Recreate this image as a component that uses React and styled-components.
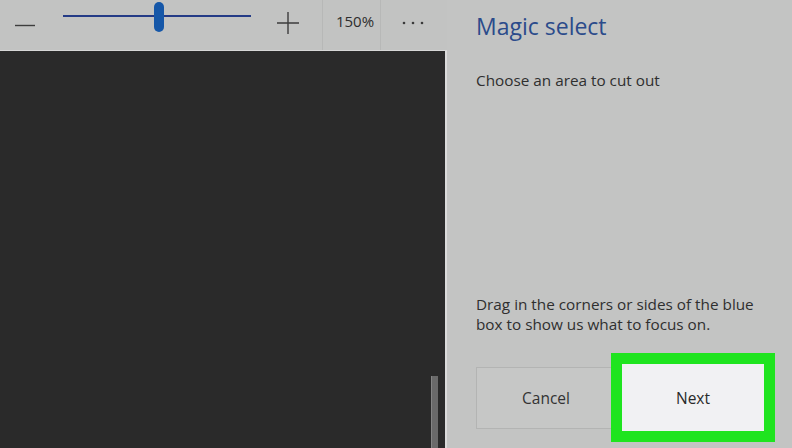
import React from "react";
import styled, { createGlobalStyle } from "styled-components";

const Global = createGlobalStyle`
  html, body { margin: 0; padding: 0; background: #c3c4c3; }
  body { font-family: "Open Sans", "Noto Sans", sans-serif; }
  #root { width: 792px; height: 448px; overflow: hidden; }
`;

const Screen = styled.div`
  display: flex;
  width: 792px;
  height: 448px;
  background: #c3c4c3;
`;

const LeftColumn = styled.div`
  display: flex;
  flex-direction: column;
  width: 447px;
  flex: none;
`;

const Toolbar = styled.div`
  display: flex;
  align-items: stretch;
  height: 50px;
  border-bottom: 1px solid #d6d7d6;
  background: #c2c3c2;
`;

const ToolButton = styled.div`
  display: flex;
  align-items: center;
  justify-content: center;
  width: ${(p) => p.$w}px;
  padding-right: ${(p) => p.$pr || 0}px;
  box-sizing: border-box;
  flex: none;
  color: #3a3a3a;
`;

const SliderTrack = styled.div`
  position: relative;
  width: 188px;
  margin: 0 14px 0 14px;
  flex: none;
  &::before {
    content: "";
    position: absolute;
    left: 0;
    right: 0;
    top: 15px;
    height: 2px;
    background: #243b86;
  }
`;

const Thumb = styled.div`
  position: absolute;
  top: 2px;
  width: 10px;
  height: 30px;
  border-radius: 5px;
  background: #1557a8;
`;

const Divider = styled.div`
  width: 1px;
  background: #b7b8b7;
  flex: none;
`;

const ZoomLabel = styled.div`
  display: flex;
  align-items: center;
  justify-content: center;
  width: 57px;
  padding: 0 0 8px 7px;
  box-sizing: border-box;
  font-size: 15px;
  color: #2e2e2e;
  flex: none;
`;

const Canvas = styled.div`
  position: relative;
  flex: 1;
  background: #2a2a2a;
  border-right: 2px solid #dadada;
`;

const ScrollThumb = styled.div`
  position: absolute;
  left: 431px;
  top: 325px;
  width: 6px;
  bottom: 0;
  background: #6a6a6a;
  border-left: 1px solid #858585;
`;

const Panel = styled.div`
  flex: 1;
  display: flex;
  flex-direction: column;
  padding: 8px 18px 0 29px;
  color: #303030;
`;

const Title = styled.h1`
  margin: 0;
  font-size: 23px;
  font-weight: 400;
  color: #2b4b8b;
  line-height: 36px;
`;

const Text = styled.p`
  margin: ${(p) => p.$m};
  font-size: 15.3px;
  line-height: 20px;
  color: #2f2f2f;
`;

const Spacer = styled.div`
  flex: 1;
`;

const Buttons = styled.div`
  position: relative;
  display: flex;
  height: 62px;
  margin: 0 0 19px 0;
`;

const CancelButton = styled.div`
  display: flex;
  align-items: center;
  justify-content: center;
  width: 166px;
  padding-right: 26px;
  box-sizing: border-box;
  border: 1px solid #b3b4b3;
  background: #c6c7c6;
  font-size: 15.5px;
  color: #333;
`;

const NextButton = styled.div`
  position: absolute;
  left: 135px;
  top: -14px;
  width: 142px;
  height: 67px;
  display: flex;
  align-items: center;
  justify-content: center;
  background: #f1f1f3;
  border: 11px solid #1fe41f;
  font-size: 15.5px;
  color: #2a2a2a;
`;

export default function App() {
  return (
    <>
      <Global />
      <Screen>
        <LeftColumn>
          <Toolbar>
            <ToolButton $w={49}>
              <svg width="22" height="22" viewBox="0 0 22 22">
                <path d="M1 11.5H21" stroke="#3d3d3d" strokeWidth="1.4" />
              </svg>
            </ToolButton>
            <SliderTrack>
              <Thumb style={{ left: 91 }} />
            </SliderTrack>
            <ToolButton $w={57} $pr={12}>
              <svg width="24" height="24" viewBox="0 0 24 24" style={{ marginBottom: 4 }}>
                <path d="M1 12H23M12 1V23" stroke="#3d3d3d" strokeWidth="1.4" />
              </svg>
            </ToolButton>
            <Divider />
            <ZoomLabel>150%</ZoomLabel>
            <Divider />
            <ToolButton $w={64}>
              <svg width="24" height="6" viewBox="0 0 24 6" style={{ marginBottom: 4 }}>
                <circle cx="3" cy="3" r="1.3" fill="#3a3a3a" />
                <circle cx="12" cy="3" r="1.3" fill="#3a3a3a" />
                <circle cx="21" cy="3" r="1.3" fill="#3a3a3a" />
              </svg>
            </ToolButton>
          </Toolbar>
          <Canvas>
            <ScrollThumb />
          </Canvas>
        </LeftColumn>
        <Panel>
          <Title>Magic select</Title>
          <Text $m="26px 0 0 0">Choose an area to cut out</Text>
          <Spacer />
          <Text $m="0 0 33px 0">
            Drag in the corners or sides of the blue
            <br />
            box to show us what to focus on.
          </Text>
          <Buttons>
            <CancelButton>Cancel</CancelButton>
            <NextButton>Next</NextButton>
          </Buttons>
        </Panel>
      </Screen>
    </>
  );
}
